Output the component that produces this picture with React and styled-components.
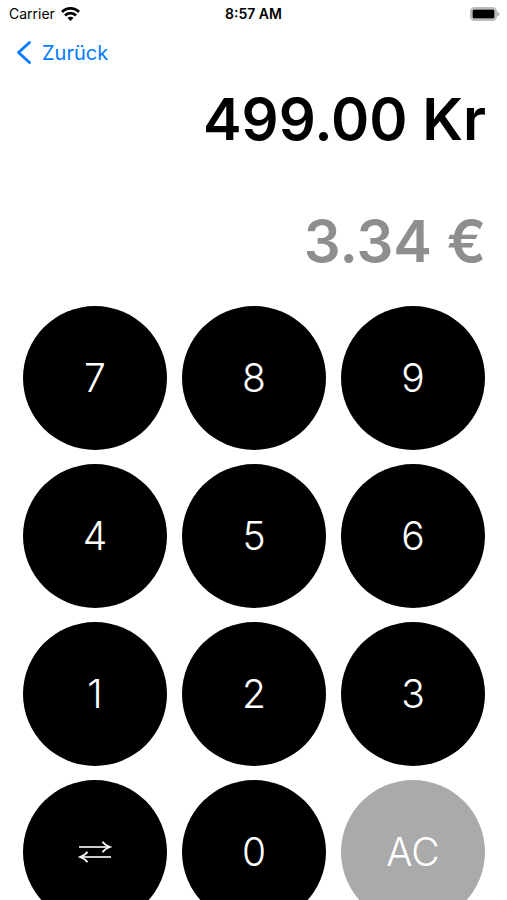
import React, { useState } from "react";
import styled, { createGlobalStyle } from "styled-components";

const GlobalStyle = createGlobalStyle`
  * {
    box-sizing: border-box;
  }
  html, body {
    margin: 0;
    height: 100%;
    overflow: hidden;
    background-color: #fff;
    font-family: Inter, "Liberation Sans", sans-serif;
  }
`;

const StatusBar = styled.header`
  display: grid;
  grid-template-columns: 1fr auto 1fr;
  align-items: center;
  height: 28px;
  padding: 0 7px;
  font-size: 14px;
  line-height: 20px;
  color: #000;
`;
const Carrier = styled.div`
  display: flex;
  align-items: center;
  gap: 6px;
  padding-left: 2px;
`;
const Clock = styled.time`
  font-weight: 600;
`;
const Battery = styled.svg`
  justify-self: end;
`;
const NavBar = styled.nav`
  display: flex;
  align-items: center;
  height: 49px;
  padding: 0 16px;
`;
const BackLink = styled.a`
  display: flex;
  align-items: center;
  gap: 10px;
  font-size: 20px;
  line-height: 28px;
  color: #007aff;
  text-decoration: none;
`;
const Display = styled.section`
  display: grid;
  gap: 38px;
  padding-bottom: 23px;
`;
const Amount = styled.output`
  display: block;
  padding-right: 21px;
  font-size: 58px;
  font-weight: 600;
  line-height: 84px;
  text-align: right;
  white-space: nowrap;
  color: ${(props) => (props.$muted ? "#8e8e90" : "#000")};
`;
const Keypad = styled.main`
  display: grid;
  grid-template-columns: repeat(3, 1fr);
  gap: 14px 15px;
  padding: 0 22px 0 23px;
`;
const Key = styled.button`
  display: flex;
  justify-content: center;
  align-items: center;
  aspect-ratio: 1;
  padding: 0;
  border: 0;
  border-radius: 50%;
  background-color: ${(props) => (props.$clear ? "#aaa" : "#000")};
  color: #fff;
  font-family: inherit;
  font-size: 39px;
  font-weight: 350;
  line-height: 48px;
  cursor: pointer;
`;

const RATE = 0.0067;
const DIGITS = ["7", "8", "9", "4", "5", "6", "1", "2", "3"];

function App() {
  const [value, setValue] = useState("499");
  const [swapped, setSwapped] = useState(false);

  const press = (digit) => setValue(value === "0" ? digit : value + digit);
  const amount = Number(value);
  const result = swapped ? amount / RATE : amount * RATE;

  return (
    <>
      <GlobalStyle />
      <StatusBar>
        <Carrier>
          Carrier
          <svg width="19" height="14" viewBox="0 0 19 14" aria-hidden="true">
            <path
              d="M1 5a12 12 0 0 1 17 0M4 8.4a7.700 7.700 0 0 1 11 0"
              fill="none"
              stroke="#000"
              strokeWidth="2.8"
            />
            <path d="M9.5 14 6.5 11a4.200 4.200 0 0 1 6 0z" />
          </svg>
        </Carrier>
        <Clock>8:57 AM</Clock>
        <Battery width="30" height="14" viewBox="0 0 30 14" aria-hidden="true">
          <rect x="1" y="1" width="25" height="12" rx="3.5" fill="none" stroke="#bbb" strokeWidth="2" />
          <rect x="2.5" y="2.5" width="22" height="9" rx="1.5" />
          <path d="M27 4.500c3.500.8 3.500 4.200 0 5z" fill="#bbb" />
        </Battery>
      </StatusBar>
      <NavBar>
        <BackLink href="#">
          <svg width="16" height="24" viewBox="0 0 16 24" aria-hidden="true">
            <path
              d="M13.5 1.500 2.500 11.500l11 10"
              fill="none"
              stroke="currentColor"
              strokeWidth="2.8"
              strokeLinecap="round"
              strokeLinejoin="round"
            />
          </svg>
          Zurück
        </BackLink>
      </NavBar>
      <Display>
        <Amount>
          {amount.toFixed(2)} {swapped ? "€" : "Kr"}
        </Amount>
        <Amount $muted>
          {result.toFixed(2)} {swapped ? "Kr" : "€"}
        </Amount>
      </Display>
      <Keypad>
        {DIGITS.map((digit) => (
          <Key key={digit} onClick={() => press(digit)}>
            {digit}
          </Key>
        ))}
        <Key aria-label="Tauschen" onClick={() => setSwapped(!swapped)}>
          <svg width="34" height="22" viewBox="0 0 34 22" aria-hidden="true">
            <path d="M1 6h31M33 16H2" fill="none" stroke="#ccc" strokeWidth="1.8" />
            <path
              d="M24.500.8Q27 4.500 32 6q-5 1.500-7.500 5.200M9.500 10.800Q7 14.500 2 16q5 1.500 7.500 5.200"
              fill="none"
              stroke="#fff"
              strokeWidth="1.8"
            />
          </svg>
        </Key>
        <Key onClick={() => press("0")}>0</Key>
        <Key $clear onClick={() => setValue("0")}>
          AC
        </Key>
      </Keypad>
    </>
  );
}

export default App;
